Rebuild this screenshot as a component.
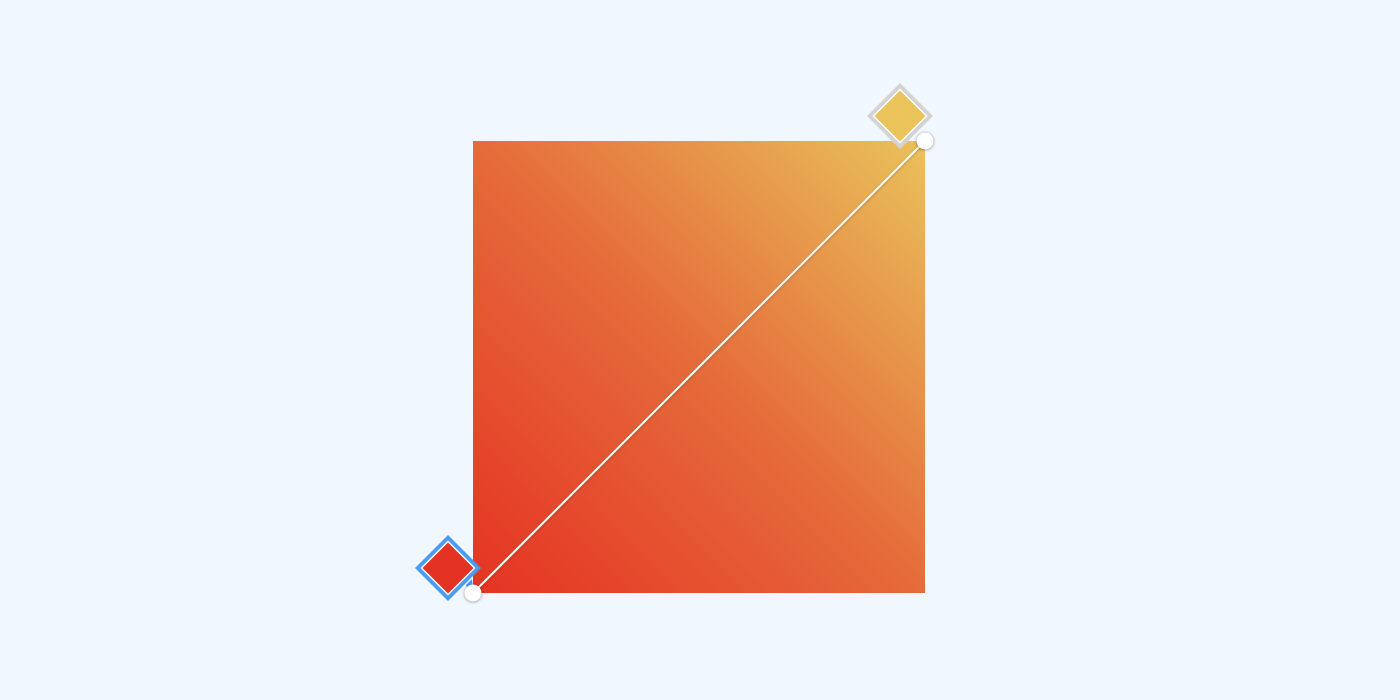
const SQUARE = { x: 473, y: 141, size: 452 };

function Diamond({ cx, cy, ring, fill }: { cx: number; cy: number; ring: string; fill: string }) {
  const pts = (r: number) => `${cx},${cy - r} ${cx + r},${cy} ${cx},${cy + r} ${cx - r},${cy}`;
  return (
    <g>
      <polygon points={pts(33)} fill={ring} />
      <polygon points={pts(27.5)} fill="#ffffff" />
      <polygon points={pts(25.5)} fill={fill} />
    </g>
  );
}

function Knob({ cx, cy }: { cx: number; cy: number }) {
  return (
    <g>
      <circle cx={cx} cy={cy + 0.5} r={9.5} fill="#000" opacity={0.22} filter="url(#blur)" />
      <circle cx={cx} cy={cy} r={8.5} fill="#ffffff" />
    </g>
  );
}

export default function App() {
  const x0 = SQUARE.x;
  const y1 = SQUARE.y + SQUARE.size;
  const x1 = SQUARE.x + SQUARE.size;
  const y0 = SQUARE.y;
  return (
    <div className="relative h-[700px] w-[1400px] overflow-hidden bg-[#f1f7ff] pl-[473px] pt-[141px]">
      <div className="h-[452px] w-[452px] bg-[linear-gradient(45deg,#e53323_0%,#e56b3a_50%,#e9c25b_100%)]" />
      <svg className="absolute left-0 top-0" width={1400} height={700}>
        <defs>
          <filter id="blur" x="-50%" y="-50%" width="200%" height="200%">
            <feGaussianBlur stdDeviation="1.2" />
          </filter>
        </defs>
        <line x1={x0} y1={y1 + 1} x2={x1} y2={y0 + 1} stroke="#000" strokeOpacity={0.2} strokeWidth={2.5} filter="url(#blur)" />
        <line x1={x0} y1={y1} x2={x1} y2={y0} stroke="#ffffff" strokeWidth={2} />
        <polygon points="466,585 472,579 473,590 468,590" fill="#4a9cf0" />
        <Diamond cx={448} cy={568} ring="#4a9cf0" fill="#e53323" />
        <Diamond cx={900} cy={116} ring="#d3d3d3" fill="#eac35a" />
        <Knob cx={x0} cy={y1} />
        <Knob cx={x1} cy={y0} />
      </svg>
    </div>
  );
}
